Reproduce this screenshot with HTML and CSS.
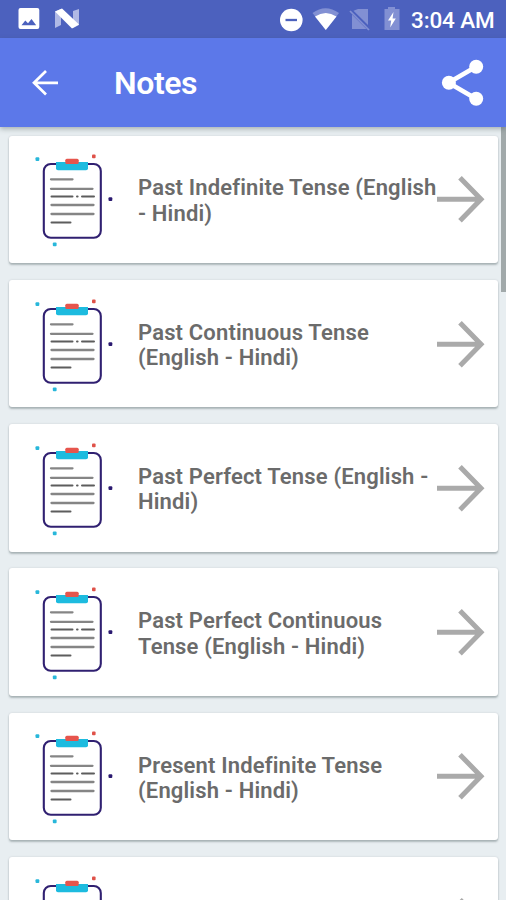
FILE: index.html
```
<!DOCTYPE html>
<html lang="en">
<head>
<meta charset="utf-8">
<title>Notes</title>
<link rel="stylesheet" href="styles.css">
</head>
<body>
<svg class="defs" width="0" height="0" aria-hidden="true">
  <symbol id="clipboard" viewBox="34 150 82 98">
    <rect x="43.8" y="164" width="57" height="73.8" rx="7" fill="#fff" stroke="#302071" stroke-width="2.1"/>
    <path d="M56 162H88V168.3Q88 170.3 86 170.3H58Q56 170.3 56 168.3Z" fill="#1dbbdf"/>
    <rect x="65.3" y="158.8" width="13.4" height="5.2" rx="1.5" fill="#e6554d"/>
    <path d="M51 179.3H72.5M51 188.8H92.5M51.5 205H93.5M51.5 214H93.5" stroke="#858585" stroke-width="2.3" stroke-linecap="round"/>
    <path d="M51.5 196.4H72.5M77 196.4H77.6M82 196.4H94M51.5 222.6H70.5" stroke="#5d5d5d" stroke-width="2" stroke-linecap="round"/>
    <rect x="35.5" y="157.2" width="3.8" height="3.8" rx="1" fill="#28b7da"/>
    <rect x="92" y="154.500" width="3.6" height="3.8" rx="1" fill="#df5148"/>
    <rect x="108.500" y="197.2" width="3.8" height="3.8" rx="1" fill="#2a1970"/>
    <rect x="52.8" y="242.4" width="3.8" height="3.8" rx="1" fill="#28b7da"/>
  </symbol>
  <symbol id="arrow" viewBox="0 0 48 48">
    <path d="M0 24.3H43.500M23 2.700L44 24.3L23 45.700" fill="none" stroke="#aaa" stroke-width="5"/>
  </symbol>
</svg>
<div class="screen">
  <div class="status">
    <svg class="status-left" width="64" height="24" viewBox="18 8 64 24">
      <path fill="#fff" fill-rule="evenodd" d="M20.5 9H37.300Q39.300 9 39.300 11V28Q39.300 30 37.300 30H20.500Q18.500 30 18.500 28V11Q18.500 9 20.500 9ZM21.500 26.200H36.200L31.500 20L28 24.200L25.300 21.500Z"/>
      <path d="M55 12.500L61 10V26L55 29ZM73 12L79 10V26L73 29Z" fill="#b0b9e5"/>
      <path d="M55 12.500L62 9.500L79 25.500L72 29.500Z" fill="#fff"/>
    </svg>
    <svg class="status-icons" width="124" height="26" viewBox="278 6 124 26">
      <circle cx="291.300" cy="20" r="11.300" fill="#fff"/>
      <path d="M285.500 20H297" stroke="#4c62bd" stroke-width="2.300"/>
      <path d="M312.500 13Q325.500 3.500 339 13L325.800 30Z" fill="#8290d3"/>
      <path d="M315 16.500Q325.800 9.500 336.500 16.500L325.800 30Z" fill="#fff"/>
      <path d="M358 9H368V25L353.500 10.800ZM352 14.500L366.500 29H352Z" fill="#8290d3"/>
      <path d="M350 11L369 30" stroke="#8290d3" stroke-width="1.700"/>
      <path d="M388 7H395V9H399.500V30H384.500V9H388Z" fill="#8290d3"/>
      <path d="M393.500 12L388 20.500H391.200L390.200 27.500L395.800 18.500H392.600Z" fill="#fff"/>
    </svg>
    <span class="clock">3:04 AM</span>
  </div>
  <header class="bar">
    <svg class="back" width="28" height="28" viewBox="31 69 28 28">
      <path d="M58 82.800H34M46 71L34 82.800L46 94.500" fill="none" stroke="#fff" stroke-width="2.700"/>
    </svg>
    <h1>Notes</h1>
    <svg class="share" width="44" height="48" viewBox="441 59 44 48">
      <path d="M476 66.800L448.500 82.800L476 98.800" fill="none" stroke="#fff" stroke-width="4.600"/>
      <g fill="#fff"><circle cx="476.200" cy="66.800" r="7"/><circle cx="448.900" cy="82.800" r="7"/><circle cx="476.200" cy="98.800" r="7"/></g>
    </svg>
  </header>
  <main class="list">
    <article class="card"><svg class="clip"><use href="#clipboard"/></svg><p>Past Indefinite Tense (English<br>- Hindi)</p><svg class="go"><use href="#arrow"/></svg></article>
    <article class="card"><svg class="clip"><use href="#clipboard"/></svg><p>Past Continuous Tense<br>(English - Hindi)</p><svg class="go"><use href="#arrow"/></svg></article>
    <article class="card"><svg class="clip"><use href="#clipboard"/></svg><p>Past Perfect Tense (English -<br>Hindi)</p><svg class="go"><use href="#arrow"/></svg></article>
    <article class="card"><svg class="clip"><use href="#clipboard"/></svg><p>Past Perfect Continuous<br>Tense (English - Hindi)</p><svg class="go"><use href="#arrow"/></svg></article>
    <article class="card"><svg class="clip"><use href="#clipboard"/></svg><p>Present Indefinite Tense<br>(English - Hindi)</p><svg class="go"><use href="#arrow"/></svg></article>
    <article class="card"><svg class="clip"><use href="#clipboard"/></svg><p></p><svg class="go"><use href="#arrow"/></svg></article>
    <div class="scrollbar"></div>
  </main>
</div>
</body>
</html>
```
FILE: styles.css
```
* { box-sizing: border-box; }
body { margin: 0; font-family: Roboto, "Liberation Sans", sans-serif; }
.defs { position: absolute; }
.screen {
  width: 506px;
  height: 900px;
  overflow: hidden;
  display: flex;
  flex-direction: column;
  background: #e8eef1;
}
.status {
  flex: none;
  height: 38px;
  display: flex;
  align-items: center;
  padding: 0 12px 0 18px;
  background: #4c61be;
}
.status-icons { margin-left: auto; }
.clock {
  width: 83px;
  margin-left: 9px;
  padding-top: 2px;
  font-size: 22.5px;
  font-weight: 500;
  line-height: 26px;
  letter-spacing: -0.15px;
  white-space: nowrap;
  color: #fff;
}
.bar {
  flex: none;
  position: relative;
  z-index: 1;
  height: 89px;
  display: flex;
  align-items: center;
  padding: 0 21px 0 31px;
  background: #5c78e9;
  box-shadow: 0 2px 5px rgba(70, 85, 85, .4);
}
.bar h1 {
  margin: 1px 0 0 55px;
  font-size: 32px;
  font-weight: 600;
  line-height: 40px;
  letter-spacing: -0.4px;
  color: #fff;
}
.share { margin-left: auto; }
.list {
  flex: 1;
  min-height: 0;
  position: relative;
  display: flex;
  flex-direction: column;
  gap: 16.8px;
  padding: 8.5px 8px 0 9px;
  overflow: hidden;
}
.card {
  flex: none;
  height: 127.5px;
  display: flex;
  align-items: center;
  padding: 0 14px 0 25px;
  border-radius: 3px;
  background: #fff;
  box-shadow: 0 2px 2px rgba(70, 85, 90, .35), 0 0 2px rgba(70, 85, 90, .2);
}
.clip { flex: none; width: 82px; height: 98px; }
.card p {
  flex: none;
  width: 299px;
  margin: 3px 0 0 22px;
  font-size: 22px;
  font-weight: 600;
  line-height: 25.3px;
  letter-spacing: 0.16px;
  font-variant-ligatures: common-ligatures;
  white-space: nowrap;
  color: #6b6b6b;
}
.go { flex: none; width: 48px; height: 48px; }
.scrollbar {
  position: absolute;
  top: 0;
  right: 0;
  width: 5px;
  height: 165px;
  background: #a1a9aa;
}
```
